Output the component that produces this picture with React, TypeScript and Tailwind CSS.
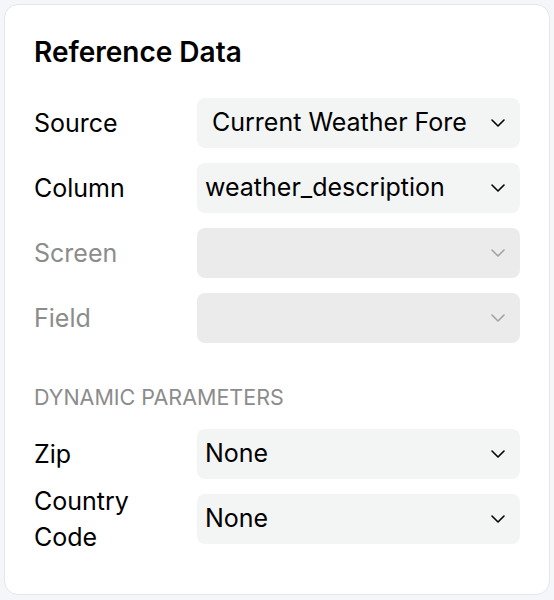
import { ChevronDown } from 'lucide-react';

interface SelectRowProps {
  label: string;
  value?: string;
  disabled?: boolean;
  inset?: boolean;
}

function SelectRow({ label, value, disabled, inset }: SelectRowProps) {
  return (
    <div className="flex h-[50px] items-center">
      <div
        className={`w-[163px] shrink-0 pr-[30px] text-[25px] leading-[36px] ${
          disabled ? 'text-[#8c8c8c]' : 'text-black'
        }`}
      >
        {label}
      </div>
      <div
        className={`flex h-full flex-1 items-center justify-between rounded-[8px] pr-[10px] ${
          inset ? 'pl-[15px]' : 'pl-2'
        } ${disabled ? 'bg-[#ebebeb]' : 'bg-[#f3f5f5]'}`}
      >
        <span className="truncate text-[25px] text-black">{value}</span>
        <ChevronDown
          className={`h-6 w-6 shrink-0 ${disabled ? 'text-[#a3a3a3]' : 'text-black'}`}
          strokeWidth={1.6}
          aria-hidden="true"
        />
      </div>
    </div>
  );
}

export default function App() {
  return (
    <div className="min-h-[600px] bg-[#f4f6fa] p-1 font-['Inter',sans-serif]">
      <div className="flex min-h-[591px] flex-col rounded-[14px] border border-[#e3e6ec] bg-white px-[29px] pt-[30px]">
        <h2 className="text-[28px] font-semibold leading-[34px] text-black">Reference Data</h2>

        <div className="mt-[29px] flex flex-col gap-[15px]">
          <SelectRow label="Source" value="Current Weather Fore" inset />
          <SelectRow label="Column" value="weather_description" />
          <SelectRow label="Screen" disabled />
          <SelectRow label="Field" disabled />
        </div>

        <div className="mt-[39px] text-[21.5px] uppercase leading-[30px] text-[#8c8c8c]">
          Dynamic Parameters
        </div>

        <div className="mt-[17px] flex flex-col gap-[15px]">
          <SelectRow label="Zip" value="None" />
          <SelectRow label="Country Code" value="None" />
        </div>
      </div>
    </div>
  );
}
